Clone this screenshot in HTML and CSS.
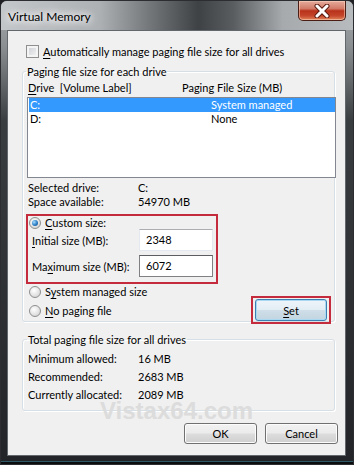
FILE: index.html
```html
<!DOCTYPE html>
<html lang="en">
<head>
  <meta charset="UTF-8" />
  <meta name="viewport" content="width=device-width, initial-scale=1.0" />
  <title>Virtual Memory</title>
  <link rel="stylesheet" href="styles.css">
</head>
<body>
  <div class="window">
    <!-- title bar -->
    <div class="titlebar">
      <span class="title">Virtual Memory</span>
      <div class="close">
        <svg width="18" height="14" viewBox="0 0 18 14">
          <path d="M4 2 L14 12 M14 2 L4 12" stroke="#5b1b10" stroke-width="5" stroke-linecap="round" />
          <path d="M4 2 L14 12 M14 2 L4 12" stroke="#ffffff" stroke-width="3" stroke-linecap="round" />
        </svg>
      </div>
    </div>

    <div class="client">
      <div class="check-row">
        <span class="checkbox"></span>
        <span><u>A</u>utomatically manage paging file size for all drives</span>
      </div>

      <fieldset class="group group-drives">
        <legend>Paging file size for each drive</legend>
        <div class="list-head">
          <span class="head-drive"><u>D</u>rive&nbsp; [Volume Label]</span>
          <span>Paging File Size (MB)</span>
        </div>
        <div class="listbox">
          <div class="list-row selected">
            <span class="row-drive">C:</span>
            <span>System managed</span>
          </div>
          <div class="list-row">
            <span class="row-drive">D:</span>
            <span>None</span>
          </div>
        </div>

        <div class="info">
          <div class="info-row"><span class="info-label">Selected drive:</span><span>C:</span></div>
          <div class="info-row"><span class="info-label">Space available:</span><span>54970 MB</span></div>
        </div>

        <!-- red annotation box -->
        <div class="mark custom-box">
          <div class="radio-row">
            <span class="radio checked"></span>
            <span><u>C</u>ustom size:</span>
          </div>
          <div class="size-row">
            <span class="size-label"><u>I</u>nitial size (MB):</span>
            <span class="textbox">2348</span>
          </div>
          <div class="size-row">
            <span class="size-label">Ma<u>x</u>imum size (MB):</span>
            <span class="textbox focused">6072</span>
          </div>
        </div>

        <div class="bottom-row">
          <div class="radios">
            <div class="radio-row">
              <span class="radio"></span>
              <span>S<u>y</u>stem managed size</span>
            </div>
            <div class="radio-row">
              <span class="radio"></span>
              <span><u>N</u>o paging file</span>
            </div>
          </div>
          <div class="mark set-box">
            <button class="btn default"><u>S</u>et</button>
          </div>
        </div>
      </fieldset>

      <fieldset class="group group-total">
        <legend>Total paging file size for all drives</legend>
        <div class="totals">
          <div class="total-row"><span class="total-label">Minimum allowed:</span><span>16 MB</span></div>
          <div class="total-row"><span class="total-label">Recommended:</span><span>2683 MB</span></div>
          <div class="total-row"><span class="total-label">Currently allocated:</span><span>2089 MB</span></div>
        </div>
      </fieldset>

      <div class="actions">
        <button class="btn">OK</button>
        <button class="btn">Cancel</button>
      </div>

      <!-- watermark -->
      <div class="watermark">Vistax64.com</div>
    </div>
  </div>
</body>
</html>
```

FILE: styles.css
```css
* {
  box-sizing: border-box;
}
body {
  margin: 0;
  background: #1d1f22;
  font-family: Lato, "Liberation Sans", sans-serif;
  font-size: 11px;
  color: #000;
}
u {
  text-decoration: underline;
  text-underline-offset: 2px;
}

/* window frame */
.window {
  width: 354px;
  height: 465px;
  display: flex;
  flex-direction: column;
  padding: 0 7px 8px 6px;
  border: 1px solid #2b2d30;
  border-radius: 7px 7px 0 0;
  background:
    linear-gradient(to top, #0b0c0d 0 2px, #2e5866 2px 3px, transparent 3px),
    linear-gradient(to bottom, #a9acaf 0, #8c8f92 45px, #3a3d40 120px, #222427 100%);
}
.titlebar {
  height: 29px;
  margin: 0 -7px 0 -6px;
  padding: 0 7px 0 6px;
  display: flex;
  justify-content: space-between;
  align-items: flex-start;
  border-radius: 6px 6px 0 0;
  background: linear-gradient(90deg, #c4c7ca 0%, #aeb1b4 28%, #75787b 42%, #3f4245 56%, #5a5d60 66%, #a7aaad 80%, #b8bbbe 100%);
}
.title {
  padding: 8px 0 0 1px;
  font-size: 12px;
  line-height: 15px;
  text-shadow: 0 0 6px #fff, 0 0 10px #fff, 0 0 12px #fff;
}
.close {
  width: 48px;
  height: 20px;
  display: flex;
  justify-content: center;
  align-items: center;
  border: 1px solid #4a1d15;
  border-top: none;
  border-radius: 0 0 5px 5px;
  background: linear-gradient(to bottom, #e6ab9c 0%, #d27a67 40%, #b8321a 52%, #c5462a 78%, #e2875e 100%);
  box-shadow: inset 0 0 0 1px rgba(255, 220, 200, 0.5);
}

/* client area */
.client {
  flex: 1;
  position: relative;
  background: #f0f0f0;
  border: 1px solid #62676b;
  padding-top: 13px;
}
.check-row {
  margin-left: 18px;
  height: 15px;
  display: flex;
  align-items: center;
  gap: 4px;
  line-height: 15px;
}
.checkbox {
  width: 13px;
  height: 13px;
  border: 1px solid #8e8f8f;
  background: linear-gradient(135deg, #c9ccd1, #f7f7f7);
  box-shadow: inset 0 0 0 2px #f4f4f4;
}

/* group boxes */
.group {
  margin: 5px 10px 0 14px;
  padding: 0 0 2px 3px;
  border: 1px solid #d5dfe5;
  border-radius: 3px;
  box-shadow: inset 1px 1px 0 #fff, 1px 1px 0 #fff;
  min-width: 0;
}
.group legend {
  padding: 0 1px;
  line-height: 15px;
}
.list-head {
  margin: 1px 0 0 2px;
  display: flex;
  line-height: 15px;
}
.head-drive {
  width: 154px;
}
.listbox {
  margin: 2px -2px 0 1px;
  height: 81px;
  border: 1px solid #828790;
  background: #fff;
  padding: 0 0 0 1px;
}
.list-row {
  display: flex;
  height: 14px;
  line-height: 14px;
  padding-left: 1px;
}
.list-row.selected {
  background: #3399ff;
  color: #fff;
}
.row-drive {
  width: 181px;
}

.info {
  margin: 3px 0 0 2px;
}
.info-row {
  display: flex;
  line-height: 14px;
}
.info-label {
  width: 110px;
}

/* red annotation */
.mark {
  border: 2px solid #c42b3c;
}
.custom-box {
  width: 192px;
  margin-top: 5px;
  padding: 0 2px 5px 0;
}
.radio-row {
  display: flex;
  align-items: center;
  gap: 4px;
  height: 13px;
  line-height: 13px;
}
.custom-box .radio-row {
  padding-left: 1px;
}
.radio {
  width: 12px;
  height: 12px;
  border: 1px solid #8e8f8f;
  border-radius: 50%;
  background: radial-gradient(circle at 40% 35%, #ffffff 0%, #e6e6e6 50%, #c9c9c9 100%);
  position: relative;
}
.radio.checked::after {
  content: '';
  position: absolute;
  top: 2px;
  left: 2px;
  width: 6px;
  height: 6px;
  border-radius: 50%;
  background: radial-gradient(circle at 35% 35%, #a6dcff 0%, #2a7cc4 55%, #16487c 100%);
}
.size-row {
  display: flex;
  align-items: center;
  height: 22px;
  padding-left: 4px;
}
.custom-box .size-row + .size-row {
  margin-top: 4px;
}
.size-label {
  width: 107px;
}
.textbox {
  width: 74px;
  height: 22px;
  padding: 2px 0 0 6px;
  background: #fff;
  border: 1px solid #e3e9ef;
  border-top-color: #abadb3;
  line-height: 15px;
}
.textbox.focused {
  border-color: #7f8083;
  border-top-color: #5c5d60;
}

.bottom-row {
  display: flex;
  justify-content: space-between;
  align-items: flex-end;
}
.radios {
  padding: 1px 0 1px 3px;
  display: flex;
  flex-direction: column;
  gap: 5px;
}
.radios .radio-row {
  height: 14px;
  line-height: 14px;
}
.set-box {
  margin: 0 3px -5px 0;
  padding: 1px 2px;
}

/* buttons */
.btn {
  font: inherit;
  color: #000;
  width: 73px;
  height: 21px;
  padding: 0;
  border: 1px solid #707070;
  border-radius: 3px;
  background: linear-gradient(to bottom, #f2f2f2 0%, #ebebeb 48%, #dddddd 52%, #cfcfcf 100%);
  box-shadow: inset 0 0 0 1px #fcfcfc;
}
.btn.default {
  width: 72px;
  height: 22px;
  border-color: #3c7fb1;
  background: linear-gradient(to bottom, #eef5fa 0%, #e2edf4 48%, #cfdee8 52%, #c2d5e0 100%);
  box-shadow: inset 0 0 0 1px #a9d8f3;
}

.group-total {
  margin-top: 10px;
  padding: 0 0 8px 4px;
}
.totals {
  margin-top: 5px;
  display: flex;
  flex-direction: column;
  gap: 4px;
}
.total-row {
  display: flex;
  line-height: 14px;
  padding-left: 1px;
}
.total-label {
  width: 110px;
}

.actions {
  margin: 12px 7px 0 0;
  display: flex;
  justify-content: flex-end;
  gap: 8px;
}

.watermark {
  position: absolute;
  top: 372px;
  left: 92px;
  font-family: "Liberation Sans", Arial, sans-serif;
  font-weight: bold;
  font-size: 24px;
  line-height: 16px;
  color: #dcdcdc;
  pointer-events: none;
}
```
